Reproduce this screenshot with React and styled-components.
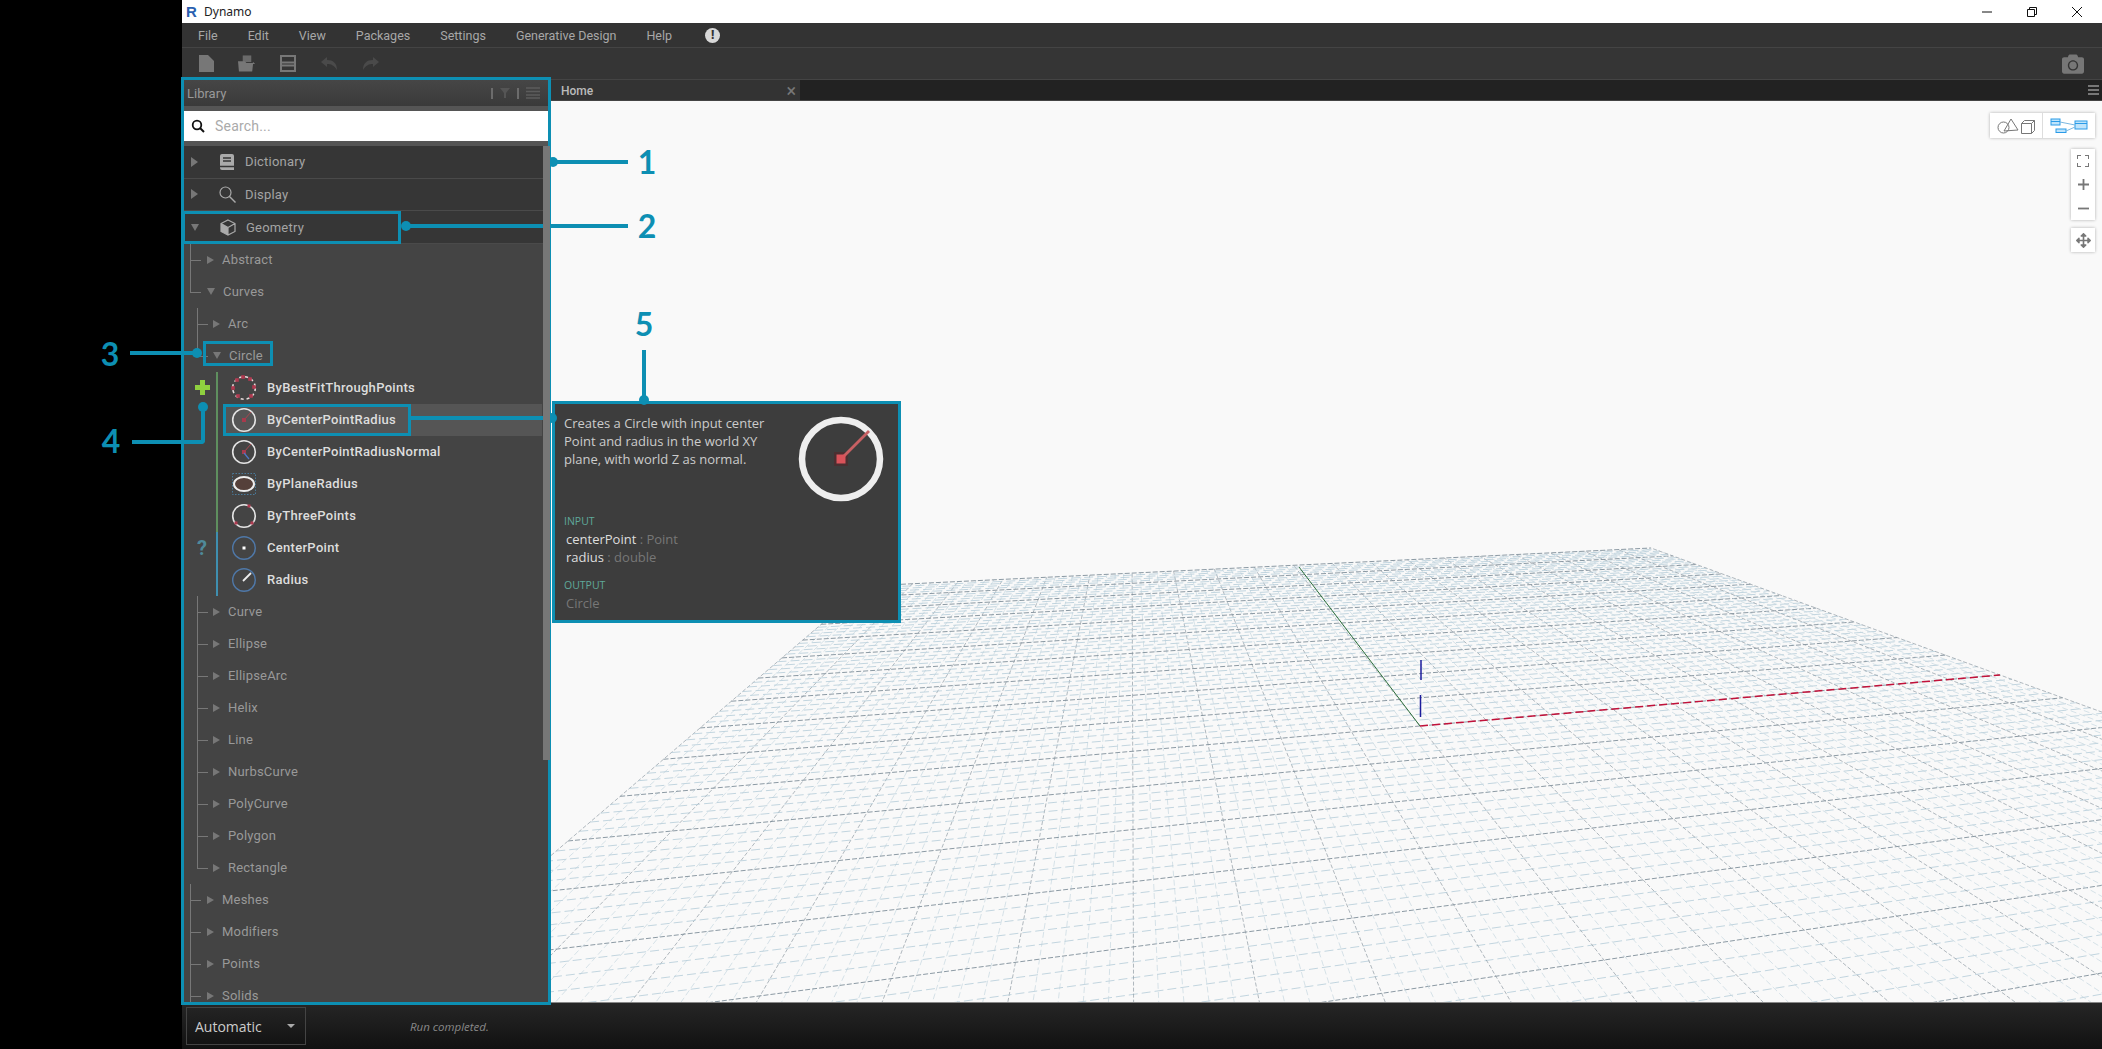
import React, { useMemo } from 'react'
import styled, { createGlobalStyle } from 'styled-components'
import { FaCamera, FaArrowsAlt } from 'react-icons/fa'

const BLUE = '#0d8fb3'

const GlobalStyle = createGlobalStyle`
  html, body { margin: 0; padding: 0; background: #000; }
  * { box-sizing: border-box; }
`

// grid is a plane seen in perspective, so map the world square through a homography
const solve = (A, b) => {
  const n = b.length
  const m = A.map((r, i) => [...r, b[i]])
  for (let c = 0; c < n; c++) {
    let p = c
    for (let r = c + 1; r < n; r++) if (Math.abs(m[r][c]) > Math.abs(m[p][c])) p = r
    ;[m[c], m[p]] = [m[p], m[c]]
    for (let r = 0; r < n; r++) {
      if (r === c) continue
      const f = m[r][c] / m[c][c]
      for (let k = c; k <= n; k++) m[r][k] -= f * m[c][k]
    }
  }
  return m.map((r, i) => r[n] / r[i])
}

const makeProject = (pairs) => {
  const A = []
  const b = []
  pairs.forEach(([u, v, x, y]) => {
    A.push([u, v, 1, 0, 0, 0, -u * x, -v * x])
    b.push(x)
    A.push([0, 0, 0, u, v, 1, -u * y, -v * y])
    b.push(y)
  })
  const h = solve(A, b)
  return (u, v) => {
    const w = h[6] * u + h[7] * v + 1
    return [(h[0] * u + h[1] * v + h[2]) / w, (h[3] * u + h[4] * v + h[5]) / w, w]
  }
}

const OFFSET_X = 550
const OFFSET_Y = 100

const lineStyles = {
  alongMinor: { stroke: '#c6d7e0', width: 0.7, dash: '6 3' },
  alongMajor: { stroke: '#8f9ba4', width: 0.7, dash: '4 2' },
  acrossMinor: { stroke: '#b4ccd8', width: 0.8, dash: '9 4' },
  acrossMajor: { stroke: '#7f8f9a', width: 0.9, dash: '5 2' },
}

const GridDrawing = () => {
  const lines = useMemo(() => {
    const project = makeProject([
      [-1, 1, 866, 585],
      [1, 1, 1651, 547],
      [0, 0, 1420, 725],
      [1, 0, 2000, 674],
    ])
    const out = []
    const near = (fn) => {
      let t = -1
      while (fn(t)[2] < 0.12 && t < 0) t += 0.01
      return t
    }
    for (let i = -50; i <= 50; i++) {
      const s = i / 50
      const major = i % 5 === 0
      const v0 = near((t) => project(s, t))
      const u0 = near((t) => project(t, s))
      out.push({ key: `v${i}`, look: major ? 'alongMajor' : 'alongMinor', p: [project(s, v0), project(s, 1)] })
      out.push({ key: `h${i}`, look: major ? 'acrossMajor' : 'acrossMinor', p: [project(u0, s), project(1, s)] })
    }
    return out
  }, [])
  return (
    <GridSvg width="1552" height="902" viewBox={`${OFFSET_X} ${OFFSET_Y} 1552 902`}>
      {lines.map((l) => (
        <line
          key={l.key}
          x1={l.p[0][0]}
          y1={l.p[0][1]}
          x2={l.p[1][0]}
          y2={l.p[1][1]}
          stroke={lineStyles[l.look].stroke}
          strokeWidth={lineStyles[l.look].width}
          strokeDasharray={lineStyles[l.look].dash}
        />
      ))}
      <line x1="1420" y1="725" x2="1299" y2="566" stroke="#2c6e3a" strokeWidth="1" />
      <line x1="1420" y1="725" x2="2000" y2="674" stroke="#c2123a" strokeWidth="1.5" strokeDasharray="8 4" />
      <line x1="1421" y1="659" x2="1421" y2="679" stroke="#1c1c9c" strokeWidth="1.5" />
      <line x1="1420.5" y1="694" x2="1420.5" y2="716" stroke="#1c1c9c" strokeWidth="1.5" />
    </GridSvg>
  )
}

const NodeIcon = ({ kind }) => {
  const blueRing = kind === 'centerPoint' || kind === 'radius'
  return (
    <svg width="28" height="28" viewBox="0 0 28 28">
      {kind === 'plane' ? (
        <>
          <rect x="2.500" y="3.500" width="23" height="21" fill="none" stroke="#4a7a9a" strokeDasharray="1.500 1.500" />
          <ellipse cx="14" cy="14" rx="10" ry="7" fill="#55403a" stroke="#eee" strokeWidth="2" />
        </>
      ) : (
        <circle
          cx="14"
          cy="14"
          r="11.300"
          fill="none"
          stroke={blueRing ? '#4f78a8' : kind === 'best' ? '#e8dcdc' : '#e4e4e4'}
          strokeWidth={blueRing ? 1.400 : 1.600}
          strokeDasharray={kind === 'best' ? '3 3' : undefined}
        />
      )}
      {kind === 'best' &&
        [[7, 6], [20, 5], [24, 13], [21, 22], [8, 22], [3, 14], [13, 3]].map(([x, y]) => (
          <rect key={x + '-' + y} x={x - 1.800} y={y - 1.800} width="3.600" height="3.600" fill="#b03a50" />
        ))}
      {kind === 'three' &&
        [[19, 4], [6, 21], [22, 21]].map(([x, y]) => (
          <rect key={x + '-' + y} x={x - 1.500} y={y - 1.500} width="3" height="3" fill="#b03a50" />
        ))}
      {(kind === 'center' || kind === 'normal') && (
        <>
          <line x1="14" y1="14" x2="21" y2="6" stroke="#a8474f" strokeWidth="1" />
          <rect x="12" y="12" width="4" height="4" fill="#a83a4c" />
        </>
      )}
      {kind === 'normal' && <line x1="14" y1="15" x2="19" y2="21" stroke="#4f78c8" strokeWidth="1.200" />}
      {kind === 'centerPoint' && <rect x="12.500" y="12.500" width="3" height="3" fill="#fff" />}
      {kind === 'radius' && <line x1="13" y1="15" x2="21" y2="7" stroke="#eee" strokeWidth="1.800" />}
    </svg>
  )
}

const menuItems = ['File', 'Edit', 'View', 'Packages', 'Settings', 'Generative Design', 'Help']

const upperTree = [
  { name: 'Abstract', level: 1, cut: 'full' },
  { name: 'Curves', level: 1, cut: 'end', open: true },
  { name: 'Arc', level: 2, cut: 'full' },
  { name: 'Circle', level: 2, cut: 'end', open: true },
]

const lowerTree = [
  { name: 'Curve', level: 2, cut: 'full' },
  { name: 'Ellipse', level: 2, cut: 'full' },
  { name: 'EllipseArc', level: 2, cut: 'full' },
  { name: 'Helix', level: 2, cut: 'full' },
  { name: 'Line', level: 2, cut: 'full' },
  { name: 'NurbsCurve', level: 2, cut: 'full' },
  { name: 'PolyCurve', level: 2, cut: 'full' },
  { name: 'Polygon', level: 2, cut: 'full' },
  { name: 'Rectangle', level: 2, cut: 'end' },
  { name: 'Meshes', level: 1, cut: 'full' },
  { name: 'Modifiers', level: 1, cut: 'full' },
  { name: 'Points', level: 1, cut: 'full' },
  { name: 'Solids', level: 1, cut: 'full' },
]

const createNodes = [
  { name: 'ByBestFitThroughPoints', icon: 'best' },
  { name: 'ByCenterPointRadius', icon: 'center', active: true },
  { name: 'ByCenterPointRadiusNormal', icon: 'normal' },
  { name: 'ByPlaneRadius', icon: 'plane' },
  { name: 'ByThreePoints', icon: 'three' },
]

const queryNodes = [
  { name: 'CenterPoint', icon: 'centerPoint' },
  { name: 'Radius', icon: 'radius' },
]

const Tree = ({ rows }) =>
  rows.map((r) => (
    <TreeRow key={r.name} $level={r.level} $cut={r.cut}>
      <Arrow $open={r.open} />
      <TreeLabel>{r.name}</TreeLabel>
    </TreeRow>
  ))

const Nodes = ({ rows }) =>
  rows.map((n) => (
    <NodeRow key={n.name} $active={n.active}>
      <NodeIcon kind={n.icon} />
      <NodeName>{n.name}</NodeName>
    </NodeRow>
  ))

const App = () => {
  return (
    <Page>
      <GlobalStyle />
      <TitleBar>
        <TitleLeft>
          <Logo>R</Logo>
          <span>Dynamo</span>
        </TitleLeft>
        <WindowButtons>
          <svg width="12" height="12" viewBox="0 0 12 12"><path d="M1 6h10" stroke="#111" fill="none" /></svg>
          <svg width="12" height="12" viewBox="0 0 12 12"><path d="M1.500 3.500h7v7h-7zM3.500 3.500v-2h7v7h-2" stroke="#111" fill="none" /></svg>
          <svg width="12" height="12" viewBox="0 0 12 12"><path d="M1 1l10 10M11 1L1 11" stroke="#111" fill="none" /></svg>
        </WindowButtons>
      </TitleBar>

      <MenuBar>
        {menuItems.map((m) => (
          <MenuItem key={m}>{m}</MenuItem>
        ))}
        <Notice>!</Notice>
      </MenuBar>

      <ToolBar>
        <ToolIcon>
          <svg width="15" height="17" viewBox="0 0 15 17"><path d="M0 0h9l6 6v11H0z" fill="#777" /></svg>
        </ToolIcon>
        <ToolIcon>
          <svg width="19" height="17" viewBox="0 0 19 17">
            <path d="M5 0h9v7H5z" fill="#6a6a6a" />
            <path d="M0 6h7l2 2h7l-1 9H1z" fill="#777" />
            <path d="M16 7l2 2h-3z" fill="#777" />
          </svg>
        </ToolIcon>
        <ToolIcon>
          <svg width="16" height="17" viewBox="0 0 16 17">
            <path d="M1 1h14v15H1zM1 7.500h14M1 10.500h14" fill="none" stroke="#777" strokeWidth="2" />
          </svg>
        </ToolIcon>
        <ToolIcon>
          <svg width="17" height="13" viewBox="0 0 17 13"><path d="M6 0L0 5l6 5V7c4 0 7 1 10 6 0-7-4-10-10-10z" fill="#4a4a4a" /></svg>
        </ToolIcon>
        <ToolIcon>
          <svg width="17" height="13" viewBox="0 0 17 13"><path d="M11 0l6 5-6 5V7C7 7 4 8 1 13 1 6 5 3 11 3z" fill="#4a4a4a" /></svg>
        </ToolIcon>
        <CameraIcon><FaCamera /></CameraIcon>
      </ToolBar>

      <Workspace>
        <Library>
          <LibraryHeader>
            <span>Library</span>
            <HeaderTools>
              <ToolBarDivider />
              <svg width="10" height="10" viewBox="0 0 10 10"><path d="M0 0h10L6 5v5H4V5z" fill="#555" /></svg>
              <ToolBarDivider />
              <svg width="14" height="12" viewBox="0 0 14 12"><path d="M0 1h14M0 4.500h14M0 8h14M0 11h14" stroke="#5c5c5c" strokeWidth="1.400" /></svg>
            </HeaderTools>
          </LibraryHeader>
          <SearchBox>
            <svg width="14" height="14" viewBox="0 0 14 14">
              <circle cx="6" cy="6" r="4.300" fill="none" stroke="#111" strokeWidth="1.800" />
              <path d="M9 9l4 4" stroke="#111" strokeWidth="2" />
            </svg>
            <SearchText>Search...</SearchText>
          </SearchBox>
          <ListArea>
            <Scrollbar />
            <Category>
              <Arrow $size={5} />
              <CategoryIcon>
                <svg width="14" height="16" viewBox="0 0 14 16">
                  <path d="M2 0h10a2 2 0 0 1 2 2v14H2a2 2 0 0 1-2-2V2a2 2 0 0 1 2-2z" fill="#aaa" />
                  <path d="M3 4h8M3 7h8M0 12.500h14" stroke="#363636" strokeWidth="1.400" />
                </svg>
              </CategoryIcon>
              <CategoryLabel>Dictionary</CategoryLabel>
            </Category>
            <Category>
              <Arrow $size={5} />
              <CategoryIcon>
                <svg width="17" height="17" viewBox="0 0 17 17">
                  <circle cx="6.500" cy="6.500" r="5.500" fill="none" stroke="#aaa" strokeWidth="1.200" />
                  <path d="M10.500 10.500l6 6" stroke="#aaa" strokeWidth="1.400" />
                </svg>
              </CategoryIcon>
              <CategoryLabel>Display</CategoryLabel>
            </Category>
            <Category>
              <Arrow $size={5} $open />
              <CategoryIcon>
                <svg width="16" height="17" viewBox="0 0 16 17">
                  <path d="M1 4.500L8 8.500V16L1 12.500z" fill="#aaa" />
                  <path d="M8 1l7 3.500v8L8 16l-7-3.500v-8zM8 8.500l7-4M8 8.500L1 4.500M8 8.500V16" fill="none" stroke="#aaa" strokeWidth="1.200" />
                </svg>
              </CategoryIcon>
              <CategoryLabel>Geometry</CategoryLabel>
            </Category>

            <Tree rows={upperTree} />

            <NodeSection>
              <Gutter $color="#8fd03f"><PlusMark /></Gutter>
              <NodeList $color="#5f8f5f"><Nodes rows={createNodes} /></NodeList>
            </NodeSection>
            <NodeSection>
              <Gutter $color="#4f8a9a"><QueryMark>?</QueryMark></Gutter>
              <NodeList $color="#3f8fb0"><Nodes rows={queryNodes} /></NodeList>
            </NodeSection>

            <Tree rows={lowerTree} />
          </ListArea>
        </Library>

        <Stage>
          <TabBar>
            <HomeTab>
              <span>Home</span>
              <TabClose>×</TabClose>
            </HomeTab>
            <TabMenu />
          </TabBar>
          <Canvas>
            <GridDrawing />
            <ViewToggle>
              <ToggleCell>
                <svg width="38" height="16" viewBox="0 0 38 16">
                  <circle cx="6.500" cy="9.500" r="5.500" fill="none" stroke="#777" />
                  <path d="M7 13L14 1l7 11z" fill="none" stroke="#777" />
                  <path d="M24.500 5.500h10v10h-10zM24.500 5.500l3-3h10v10l-3 3M34.500 5.500l3-3" fill="none" stroke="#777" />
                </svg>
              </ToggleCell>
              <ToggleCell $on>
                <svg width="38" height="16" viewBox="0 0 38 16">
                  <rect x="1" y="1" width="9" height="6" fill="#bfe4fb" stroke="#2a9be8" />
                  <path d="M1 3.500h9" stroke="#2a9be8" />
                  <rect x="25" y="3" width="12" height="8" fill="#bfe4fb" stroke="#2a9be8" />
                  <path d="M25 5.500h12" stroke="#2a9be8" />
                  <rect x="6" y="11" width="10" height="3.500" fill="#bfe4fb" stroke="#2a9be8" />
                  <path d="M10 4l15 3M16 13l9-4" stroke="#7db8e0" />
                </svg>
              </ToggleCell>
            </ViewToggle>
            <ZoomGroup>
              <svg width="12" height="12" viewBox="0 0 12 12">
                <path d="M0 4V0h4M8 0h4v4M12 8v4H8M4 12H0V8" fill="none" stroke="#777" strokeWidth="2" />
              </svg>
              <svg width="11" height="11" viewBox="0 0 11 11"><path d="M0 5.500h11M5.500 0v11" stroke="#777" strokeWidth="1.800" /></svg>
              <svg width="11" height="11" viewBox="0 0 11 11"><path d="M0 5.500h11" stroke="#777" strokeWidth="1.800" /></svg>
            </ZoomGroup>
            <PanButton><FaArrowsAlt /></PanButton>
          </Canvas>
        </Stage>
      </Workspace>

      <StatusBar>
        <RunSelect>
          <span>Automatic</span>
          <SelectArrow />
        </RunSelect>
        <RunState>Run completed.</RunState>
      </StatusBar>

      <Tooltip>
        <TooltipTop>
          <Description>
            Creates a Circle with input center Point and radius in the world XY plane, with world Z as normal.
          </Description>
          <svg width="90" height="90" viewBox="0 0 90 90">
            <circle cx="45" cy="45" r="39" fill="none" stroke="#eeeeee" strokeWidth="6.500" />
            <rect x="38" y="38" width="14" height="14" fill="#4a2f31" />
            <line x1="46" y1="44" x2="73" y2="17" stroke="#c76063" strokeWidth="2.800" />
            <rect x="40.500" y="40.500" width="9" height="9" fill="#d9535a" />
          </svg>
        </TooltipTop>
        <SectionLabel>INPUT</SectionLabel>
        <Param>centerPoint<ParamType> : Point</ParamType></Param>
        <Param>radius<ParamType> : double</ParamType></Param>
        <SectionLabel $gap>OUTPUT</SectionLabel>
        <Param><ParamType>Circle</ParamType></Param>
      </Tooltip>

      <Frame $x={181} $y={77} $w={370} $h={928} />
      <Frame $x={182} $y={211} $w={219} $h={33} />
      <Frame $x={203} $y={341} $w={70} $h={25} />
      <Frame $x={223} $y={404} $w={188} $h={32} />
      <Frame $x={552} $y={401} $w={349} $h={222} />

      <HLine $x={553} $y={162} $w={75} />
      <Dot $x={553} $y={162} />
      <Num $x={647} $y={162}>1</Num>

      <HLine $x={406} $y={226} $w={222} />
      <Dot $x={406} $y={226} />
      <Num $x={647} $y={226}>2</Num>

      <HLine $x={130} $y={353} $w={67} />
      <Dot $x={197} $y={353} />
      <Num $x={110} $y={354}>3</Num>

      <ElbowLine />
      <Dot $x={203} $y={407} />
      <Num $x={111} $y={441}>4</Num>

      <HLine $x={411} $y={418} $w={141} />
      <Dot $x={552} $y={418} />

      <VLine $x={644} $y={350} $h={50} />
      <Dot $x={644} $y={400} />
      <Num $x={644} $y={324}>5</Num>
    </Page>
  )
}

export default App

const Page = styled.div`
  position: relative;
  width: 2102px;
  height: 1049px;
  padding-left: 182px;
  background: #000;
  display: flex;
  flex-direction: column;
  overflow: hidden;
  font-family: Roboto, "Noto Sans", sans-serif;
`

const TitleBar = styled.div`
  height: 23px;
  background: #fff;
  display: flex;
  align-items: center;
  justify-content: space-between;
  padding: 0 19px 0 4px;
  font-family: "Noto Sans", sans-serif;
  font-size: 12px;
  color: #222;
`

const TitleLeft = styled.div`
  display: flex;
  align-items: center;
  gap: 7px;
`

const Logo = styled.span`
  width: 11px;
  color: #2a60b0;
  font-family: "Liberation Sans", sans-serif;
  font-weight: bold;
  font-size: 15px;
  line-height: 14px;
  text-align: center;
`

const WindowButtons = styled.div`
  display: flex;
  gap: 33px;
`

const MenuBar = styled.div`
  height: 25px;
  background: #333;
  border-bottom: 1px solid #444;
  display: flex;
  align-items: center;
  gap: 30px;
  padding-left: 16px;
`

const MenuItem = styled.span`
  font-size: 12.5px;
  color: #a8a8a8;
`

const Notice = styled.span`
  width: 15px;
  height: 15px;
  margin-left: 3px;
  border-radius: 50%;
  background: #d8d8d8;
  color: #333;
  font-size: 12px;
  font-weight: 900;
  line-height: 15px;
  text-align: center;
`

const ToolBar = styled.div`
  height: 32px;
  background: #353535;
  border-bottom: 1px solid #444;
  display: flex;
  align-items: center;
  gap: 23px;
  padding-left: 15px;
`

const ToolIcon = styled.span`
  width: 18px;
  height: 17px;
  display: flex;
  align-items: center;
  justify-content: center;
`

const CameraIcon = styled.span`
  margin-left: auto;
  margin-right: 18px;
  display: flex;
  font-size: 22px;
  color: #777;
`

const Workspace = styled.div`
  flex: 1;
  min-height: 0;
  display: flex;
`

const Library = styled.div`
  width: 368px;
  display: flex;
  flex-direction: column;
  background: #555;
`

const LibraryHeader = styled.div`
  height: 26px;
  flex: none;
  background: linear-gradient(#464646, #3a3a3a);
  display: flex;
  align-items: center;
  justify-content: space-between;
  padding: 0 10px 0 5px;
  font-size: 13px;
  color: #999;
`

const HeaderTools = styled.div`
  display: flex;
  align-items: center;
  gap: 7px;
`

const ToolBarDivider = styled.span`
  width: 2px;
  height: 11px;
  background: #6c6c6c;
`

const SearchBox = styled.div`
  height: 30px;
  flex: none;
  margin-top: 5px;
  background: #fff;
  display: flex;
  align-items: center;
  gap: 10px;
  padding-left: 9px;
`

const SearchText = styled.span`
  font-size: 14px;
  color: #aaa;
  letter-spacing: 0.2px;
`

const ListArea = styled.div`
  position: relative;
  flex: 1;
  min-height: 0;
  margin-top: 5px;
  background: #444;
  overflow: hidden;
`

const Scrollbar = styled.div`
  position: absolute;
  top: 0;
  right: 0;
  width: 7px;
  height: 614px;
  background: #777;
  z-index: 1;
`

const Category = styled.div`
  height: 32.67px;
  background: #363636;
  border-bottom: 1px solid #4a4a4a;
  display: flex;
  align-items: center;
  padding-left: 9px;
`

const CategoryIcon = styled.span`
  width: 24px;
  margin-left: 17px;
  display: flex;
  justify-content: center;
`

const CategoryLabel = styled.span`
  margin-left: 6px;
  font-size: 13px;
  color: #a4a4a4;
  letter-spacing: 0.2px;
`

const Arrow = styled.span`
  flex: none;
  width: 0;
  height: 0;
  ${(p) =>
    p.$open
      ? `border-left: 4.5px solid transparent;
         border-right: 4.5px solid transparent;
         border-top: 7px solid #777;`
      : `border-top: ${p.$size || 4.5}px solid transparent;
         border-bottom: ${p.$size || 4.5}px solid transparent;
         border-left: 7px solid #777;`}
`

const TreeRow = styled.div`
  position: relative;
  height: 32px;
  display: flex;
  align-items: center;
  padding-left: ${(p) => (p.$level === 1 ? 25 : 31)}px;

  &::before {
    content: '';
    position: absolute;
    left: ${(p) => (p.$level === 1 ? 8 : 15)}px;
    top: 0;
    width: 1px;
    height: ${(p) => (p.$cut === 'end' ? '50%' : '100%')};
    background: #777;
  }

  &::after {
    content: '';
    position: absolute;
    left: ${(p) => (p.$level === 1 ? 8 : 15)}px;
    top: 50%;
    width: 11px;
    height: 1px;
    background: #777;
  }
`

const TreeLabel = styled.span`
  margin-left: 8px;
  font-size: 13px;
  color: #999;
  letter-spacing: 0.2px;
`

const NodeSection = styled.div`
  display: flex;
`

const Gutter = styled.div`
  width: 34px;
  height: 32px;
  flex: none;
  display: flex;
  align-items: center;
  justify-content: center;
  padding-left: 6px;
  color: ${(p) => p.$color};
`

const PlusMark = styled.span`
  width: 15px;
  height: 15px;
  background:
    linear-gradient(currentColor, currentColor) center / 15px 5px no-repeat,
    linear-gradient(currentColor, currentColor) center / 5px 15px no-repeat;
`

const QueryMark = styled.span`
  font-size: 20px;
  font-weight: 700;
`

const NodeList = styled.div`
  flex: 1;
  border-left: 2px solid ${(p) => p.$color};
  padding-left: 5px;
  margin-right: 8px;
`

const NodeRow = styled.div`
  height: 32px;
  display: flex;
  align-items: center;
  padding-left: 7px;
  gap: 9px;
  background: ${(p) => (p.$active ? '#555' : 'transparent')};
`

const NodeName = styled.span`
  font-size: 13px;
  font-weight: 500;
  color: #ddd;
  letter-spacing: 0.3px;
`

const Stage = styled.div`
  flex: 1;
  min-width: 0;
  display: flex;
  flex-direction: column;
`

const TabBar = styled.div`
  height: 21px;
  flex: none;
  background: #222;
  border-bottom: 1px solid #444;
  display: flex;
  align-items: stretch;
  justify-content: space-between;
`

const HomeTab = styled.div`
  width: 250px;
  background: #333;
  display: flex;
  align-items: center;
  justify-content: space-between;
  padding: 2px 4px 0 11px;
  font-size: 12px;
  font-weight: 500;
  color: #bbb;
`

const TabClose = styled.span`
  font-size: 18px;
  font-weight: 400;
  line-height: 16px;
  color: #777;
`

const TabMenu = styled.span`
  width: 11px;
  height: 11px;
  margin: 5px 3px 0 0;
  background: repeating-linear-gradient(#777 0 2px, transparent 2px 4px);
`

const Canvas = styled.div`
  position: relative;
  flex: 1;
  min-height: 0;
  background: #f9f9f9;
  overflow: hidden;
`

const GridSvg = styled.svg`
  position: absolute;
  inset: 0;
`

const controlBox = `
  position: absolute;
  background: #fff;
  box-shadow: 0 0 3px rgba(0, 0, 0, 0.3);
`

const ViewToggle = styled.div`
  ${controlBox}
  top: 12px;
  right: 7px;
  width: 105px;
  height: 25px;
  display: flex;
`

const ToggleCell = styled.div`
  flex: 1;
  display: flex;
  align-items: center;
  justify-content: center;
  border-left: ${(p) => (p.$on ? '1px solid #ddd' : 'none')};
`

const ZoomGroup = styled.div`
  ${controlBox}
  top: 48px;
  right: 7px;
  width: 24px;
  height: 71px;
  display: flex;
  flex-direction: column;
  align-items: center;
  justify-content: space-around;
`

const PanButton = styled.div`
  ${controlBox}
  top: 127px;
  right: 7px;
  width: 24px;
  height: 24px;
  display: flex;
  align-items: center;
  justify-content: center;
  font-size: 15px;
  color: #777;
`

const StatusBar = styled.div`
  height: 47px;
  flex: none;
  border-top: 1px solid #888;
  background: linear-gradient(#262626, #111);
  display: flex;
  align-items: center;
  padding-left: 4px;
`

const RunSelect = styled.div`
  width: 120px;
  height: 38px;
  border: 1px solid #444;
  display: flex;
  align-items: center;
  justify-content: space-between;
  padding: 0 10px 0 8px;
  font-family: "Open Sans", sans-serif;
  font-size: 14px;
  color: #ccc;
`

const SelectArrow = styled.span`
  width: 0;
  height: 0;
  border-left: 4px solid transparent;
  border-right: 4px solid transparent;
  border-top: 4px solid #aaa;
`

const RunState = styled.span`
  margin-left: 104px;
  font-family: "Open Sans", sans-serif;
  font-size: 11.5px;
  font-style: italic;
  color: #888;
`

const Tooltip = styled.div`
  position: absolute;
  left: 552px;
  top: 401px;
  width: 349px;
  height: 222px;
  padding: 13px 12px 0 12px;
  background: #3d3d3d;
  font-family: "Open Sans", sans-serif;
  font-size: 13px;
  color: #ccc;
`

const TooltipTop = styled.div`
  display: flex;
  justify-content: space-between;
  height: 98px;
  padding-right: 3px;
`

const Description = styled.div`
  width: 222px;
  line-height: 18px;
`

const SectionLabel = styled.div`
  margin-top: ${(p) => (p.$gap ? 10 : 0)}px;
  font-size: 10.5px;
  line-height: 18px;
  color: #5fa89a;
`

const Param = styled.div`
  margin-left: 2px;
  line-height: 18px;
  color: #ddd;
`

const ParamType = styled.span`
  color: #777;
`

const Frame = styled.div`
  position: absolute;
  left: ${(p) => p.$x}px;
  top: ${(p) => p.$y}px;
  width: ${(p) => p.$w}px;
  height: ${(p) => p.$h}px;
  border: 3px solid ${BLUE};
  pointer-events: none;
`

const HLine = styled.div`
  position: absolute;
  left: ${(p) => p.$x}px;
  top: ${(p) => p.$y - 2}px;
  width: ${(p) => p.$w}px;
  height: 4px;
  background: ${BLUE};
`

const VLine = styled.div`
  position: absolute;
  left: ${(p) => p.$x - 2}px;
  top: ${(p) => p.$y}px;
  width: 4px;
  height: ${(p) => p.$h}px;
  background: ${BLUE};
`

const ElbowLine = styled.div`
  position: absolute;
  left: 132px;
  top: 407px;
  width: 73px;
  height: 37px;
  border-right: 4px solid ${BLUE};
  border-bottom: 4px solid ${BLUE};
  border-bottom-right-radius: 4px;
`

const Dot = styled.div`
  position: absolute;
  left: ${(p) => p.$x - 5}px;
  top: ${(p) => p.$y - 5}px;
  width: 10px;
  height: 10px;
  border-radius: 50%;
  background: ${BLUE};
`

const Num = styled.div`
  position: absolute;
  left: ${(p) => p.$x}px;
  top: ${(p) => p.$y}px;
  transform: translate(-50%, -50%);
  font-family: Lato, sans-serif;
  font-size: 32px;
  font-weight: 700;
  line-height: 1;
  color: ${BLUE};
`
